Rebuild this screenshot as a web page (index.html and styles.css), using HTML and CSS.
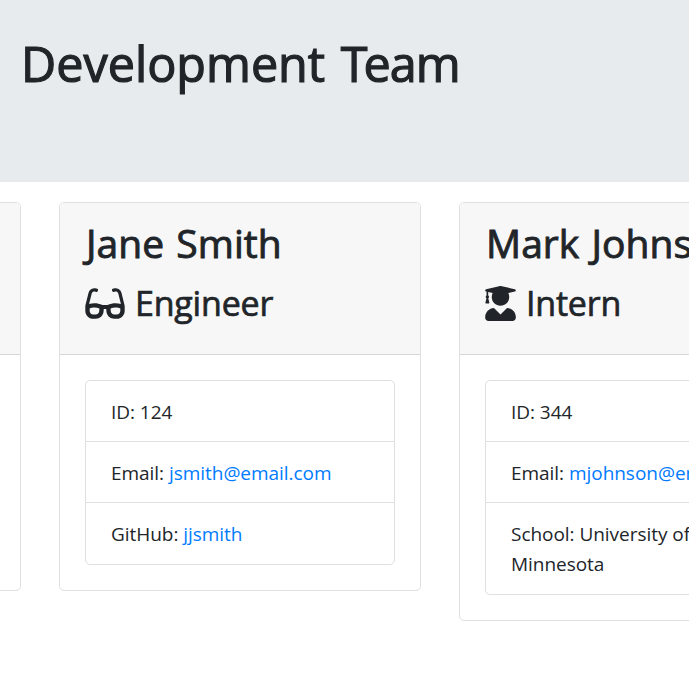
FILE: index.html
```
<!DOCTYPE html>
<html lang="en">
<head>
<meta charset="utf-8">
<title>Development Team</title>
<link rel="stylesheet" href="styles.css">
</head>
<body>
<header class="banner"><h1>Development <span class="tight"><span class="kern">T</span>eam</span></h1></header>
<main class="team">
  <section class="card"><div class="card-header"></div></section>
  <section class="card">
    <div class="card-header">
      <h2><span>Jane Smith</span></h2>
      <h3><svg class="icon glasses" viewBox="0 0 576 512"><path fill="currentColor" d="M574.1 280.37L528.75 98.66c-5.91-23.7-21.59-44.05-43-55.81-21.44-11.73-46.97-14.11-70.19-6.33l-15.25 5.08c-8.39 2.79-12.92 11.86-10.12 20.24l5.06 15.18c2.79 8.38 11.85 12.91 20.23 10.12l13.18-4.39c10.87-3.62 23-3.57 33.16 1.73 10.29 5.37 17.57 14.56 20.37 25.82l38.46 153.82c-22.19-6.81-49.79-12.46-81.2-12.46-34.77 0-73.98 7.02-114.85 26.74h-73.18c-40.87-19.74-80.08-26.75-114.86-26.75-31.42 0-59.02 5.65-81.21 12.46l38.46-153.83c2.79-11.25 10.09-20.45 20.38-25.81 10.16-5.3 22.28-5.35 33.15-1.73l13.17 4.39c8.38 2.79 17.44-1.74 20.23-10.12l5.06-15.18c2.8-8.38-1.73-17.45-10.12-20.24l-15.25-5.08c-23.22-7.78-48.75-5.41-70.19 6.33-21.41 11.77-37.09 32.11-43 55.8L1.9 280.37A64.218 64.218 0 0 0 0 295.86v70.25C0 429.01 51.58 480 115.2 480h37.12c60.28 0 110.37-45.94 114.88-105.37l2.93-38.63h35.75l2.93 38.63C313.31 434.06 363.4 480 423.68 480h37.12c63.62 0 115.2-50.99 115.2-113.88v-70.25c0-5.23-.64-10.43-1.9-15.5zm-370.72 89.42c-1.97 25.91-24.4 46.21-51.06 46.21H115.2C86.97 416 64 393.62 64 366.11v-37.54c18.12-6.49 43.42-12.92 72.58-12.92 23.86 0 47.26 4.33 69.93 12.92l-3.13 41.22zM512 366.12c0 27.51-22.97 49.88-51.2 49.88h-37.12c-26.67 0-49.1-20.3-51.06-46.21l-3.13-41.22c22.67-8.59 46.08-12.92 69.95-12.92 29.17 0 54.46 6.43 72.58 12.92v37.54z"/></svg><span>Engineer</span></h3>
    </div>
    <div class="card-body">
      <ul class="list">
        <li>ID: 124</li>
        <li>Email: <a href="mailto:jsmith@email.com">jsmith@email.com</a></li>
        <li>GitHub: <a href="#">jjsmith</a></li>
      </ul>
    </div>
  </section>
  <section class="card">
    <div class="card-header">
      <h2><span>Mark Johnson</span></h2>
      <h3><svg class="icon graduate" viewBox="0 0 448 512"><path fill="currentColor" d="M319.4 320.6L224 416l-95.4-95.4C57.1 323.7 0 382.2 0 454.4v9.6c0 26.5 21.5 48 48 48h352c26.5 0 48-21.5 48-48v-9.6c0-72.2-57.1-130.7-128.6-133.8zM13.6 79.8l6.4 1.5v58.4c-7 4.2-12 11.5-12 20.3 0 8.4 4.6 15.4 11.1 19.7L3.5 242c-1.7 6.9 2.1 14 7.6 14h41.8c5.5 0 9.3-7.1 7.6-14l-15.6-62.3C51.4 175.4 56 168.4 56 160c0-8.8-5-16.1-12-20.3V87.1l66 15.9c-8.6 17.2-14 36.4-14 57 0 70.7 57.3 128 128 128s128-57.3 128-128c0-20.6-5.3-39.8-14-57l96.3-23.2c18.2-4.4 18.2-27.1 0-31.5l-190.4-46c-13-3.1-26.7-3.1-39.7 0L13.6 48.2c-18.1 4.4-18.1 27.2 0 31.6z"/></svg><span>Intern</span></h3>
    </div>
    <div class="card-body">
      <ul class="list">
        <li>ID: 344</li>
        <li>Email: <a href="mailto:mjohnson@email.com">mjohnson@email.com</a></li>
        <li>School: University of Minnesota</li>
      </ul>
    </div>
  </section>
</main>
</body>
</html>
```
FILE: styles.css
```
* { box-sizing: border-box; }
body {
  margin: 0;
  overflow: hidden;
  background: #fff;
  color: #212529;
  font-family: "Segoe UI", "Open Sans", "Noto Sans", sans-serif;
  font-size: 19px;
  line-height: 30px;
  letter-spacing: -0.04px;
}
h1, h2, h3 { margin: 0; font-weight: 500; white-space: nowrap; -webkit-text-stroke: 0.7px currentColor; }
.banner { height: 182px; padding: 33px 21px 0; background: #e7ebee; }
h1 { font-size: 48.5px; line-height: 60px; letter-spacing: 0; word-spacing: 3px; -webkit-text-stroke-width: 1.2px; }
.tight { letter-spacing: -1px; }
.kern { letter-spacing: -4px; }
.team {
  display: grid;
  grid-template-columns: 362px 362px 362px;
  column-gap: 38px;
  align-items: start;
  margin-left: -341px;
  padding-top: 20px;
}
.card { border: 1px solid #dfdfdf; border-radius: 5px; }
.card:first-child { height: 389px; }
.card-header {
  height: 152px;
  padding: 16px 25px 0;
  background: #f7f7f7;
  border-bottom: 1px solid #d8d8d8;
  border-radius: 4px 4px 0 0;
}
h2 { font-size: 39px; line-height: 48px; margin-bottom: 15px; padding-left: 1px; letter-spacing: 0.05px; word-spacing: 2px; -webkit-text-stroke-width: 0.9px; }
h3 { display: flex; align-items: center; font-size: 34px; line-height: 42px; letter-spacing: -0.2px; }
.icon { display: block; height: 35px; flex: none; }
.icon path { stroke: none; }
.glasses { width: 40px; margin-right: 10px; }
.graduate { width: 31px; margin-right: 10px; }
.card-body { padding: 25px; }
.list { margin: 0; padding: 0; list-style: none; border: 1px solid #dfdfdf; border-radius: 5px; }
.list li { padding: 16px 25px 14px; }
.list li:last-child { padding-bottom: 15px; }
.list li + li { border-top: 1px solid #dfdfdf; }
a { color: #007bff; text-decoration: none; }
```
